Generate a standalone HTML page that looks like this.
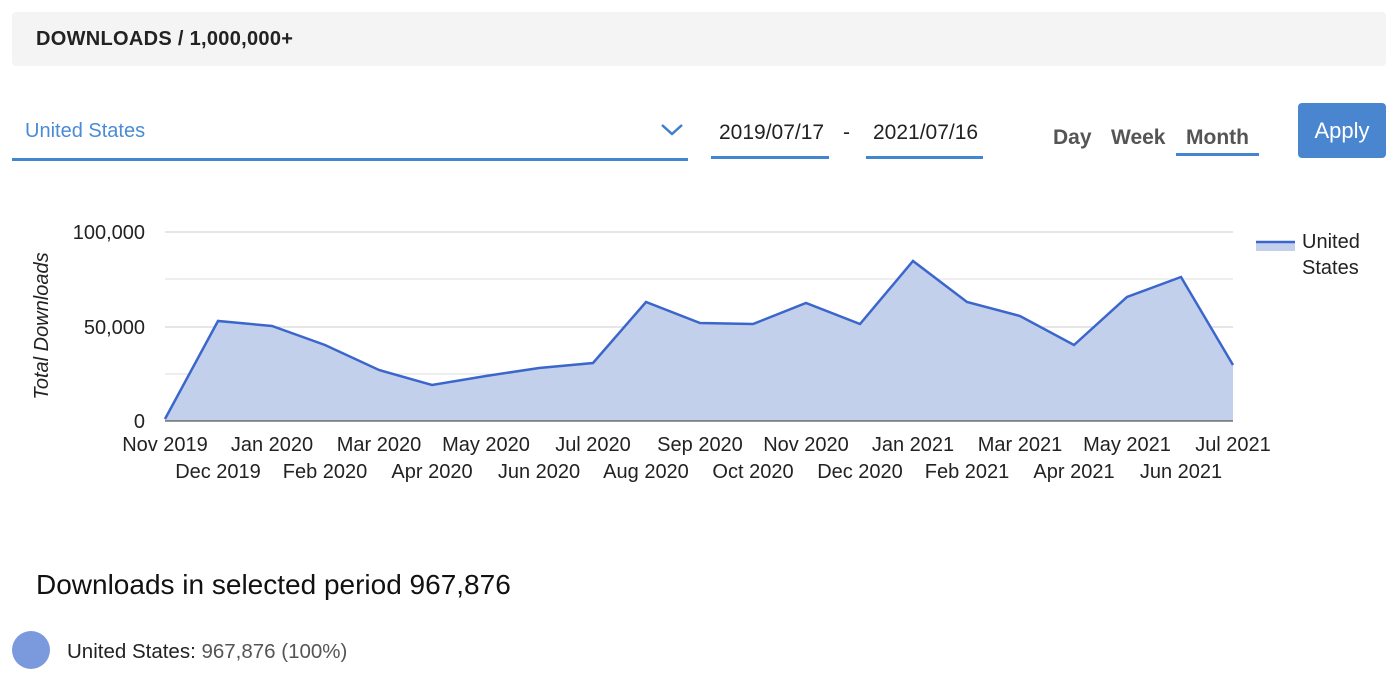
<!DOCTYPE html>
<html><head><meta charset="utf-8"><style>
body{margin:0;width:1400px;height:677px;background:#fff;font-family:"Liberation Sans",Arial,sans-serif;position:relative;overflow:hidden}
.hdr{position:absolute;left:12px;top:12px;width:1374px;height:54px;background:#f4f4f4;border-radius:4px}
.hdr span{position:absolute;left:24px;top:16px;font-size:20px;font-weight:bold;color:#222;letter-spacing:0.3px}
.abs{position:absolute}
</style></head><body>
<div class="hdr"><span>DOWNLOADS / 1,000,000+</span></div>
<div class="abs" style="left:25px;top:120px;font-size:20px;color:#4a8bd6">United States</div>
<svg class="abs" style="left:660px;top:122px" width="24" height="16"><path d="M2 3 L12 12 L22 3" fill="none" stroke="#3f7fcf" stroke-width="2.5"/></svg>
<div class="abs" style="left:12px;top:158px;width:676px;height:3px;background:#4285d0"></div>
<div class="abs" style="left:719px;top:121px;font-size:21px;color:#222">2019/07/17</div>
<div class="abs" style="left:711px;top:156px;width:118px;height:3px;background:#4285d0"></div>
<div class="abs" style="left:843px;top:121px;font-size:21px;color:#222">-</div>
<div class="abs" style="left:873px;top:121px;font-size:21px;color:#222">2021/07/16</div>
<div class="abs" style="left:866px;top:156px;width:117px;height:3px;background:#4285d0"></div>
<div class="abs" style="left:1053px;top:126px;font-size:21px;font-weight:bold;color:#555">Day</div>
<div class="abs" style="left:1111px;top:126px;font-size:21px;font-weight:bold;color:#555">Week</div>
<div class="abs" style="left:1186px;top:126px;font-size:21px;font-weight:bold;color:#555">Month</div>
<div class="abs" style="left:1176px;top:153px;width:83px;height:3px;background:#4285d0"></div>
<div class="abs" style="left:1298px;top:103px;width:88px;height:55px;background:#4a86d0;border-radius:4px;color:#fff;font-size:22px;text-align:center;line-height:55px">Apply</div>
<svg class="abs" style="left:0;top:0" width="1400" height="677">
<g stroke="#ddd" stroke-width="1"><line x1="165" y1="232" x2="1233" y2="232" stroke="#ccc"/><line x1="165" y1="279" x2="1233" y2="279"/><line x1="165" y1="327" x2="1233" y2="327" stroke="#ccc"/><line x1="165" y1="374" x2="1233" y2="374"/></g>
<path d="M165 419 L218 321 L272 326 L325 345 L379 370 L432 385 L486 376 L539 368 L593 363 L646 302 L700 323 L753 324 L806 303 L860 324 L913 261 L967 302 L1020 316 L1074 345 L1127 297 L1181 277 L1233 365 L1233 421 L165 421Z" fill="#c3d0ec"/>
<path d="M165 419 L218 321 L272 326 L325 345 L379 370 L432 385 L486 376 L539 368 L593 363 L646 302 L700 323 L753 324 L806 303 L860 324 L913 261 L967 302 L1020 316 L1074 345 L1127 297 L1181 277 L1233 365" fill="none" stroke="#3b66cc" stroke-width="2.5"/>
<line x1="165" y1="421" x2="1233" y2="421" stroke="#333" stroke-width="1"/>
<g font-size="20" fill="#222" text-anchor="end"><text x="145" y="239">100,000</text><text x="145" y="334">50,000</text><text x="145" y="428">0</text></g>
<text transform="translate(48 326) rotate(-90)" font-size="20" font-style="italic" fill="#222" text-anchor="middle">Total Downloads</text>
<g font-size="20" fill="#222" text-anchor="middle">
<text x="165" y="451">Nov 2019</text><text x="272" y="451">Jan 2020</text><text x="379" y="451">Mar 2020</text><text x="486" y="451">May 2020</text><text x="593" y="451">Jul 2020</text><text x="700" y="451">Sep 2020</text><text x="806" y="451">Nov 2020</text><text x="913" y="451">Jan 2021</text><text x="1020" y="451">Mar 2021</text><text x="1127" y="451">May 2021</text><text x="1233" y="451">Jul 2021</text>
<text x="218" y="478">Dec 2019</text><text x="325" y="478">Feb 2020</text><text x="432" y="478">Apr 2020</text><text x="539" y="478">Jun 2020</text><text x="646" y="478">Aug 2020</text><text x="753" y="478">Oct 2020</text><text x="860" y="478">Dec 2020</text><text x="967" y="478">Feb 2021</text><text x="1074" y="478">Apr 2021</text><text x="1181" y="478">Jun 2021</text>
</g>
<rect x="1256" y="241" width="39" height="10" fill="#c3d0ec"/><line x1="1256" y1="242" x2="1295" y2="242" stroke="#3b66cc" stroke-width="2.5"/>
<text x="1302" y="248" font-size="20" fill="#222">United</text><text x="1302" y="274" font-size="20" fill="#222">States</text>
<circle cx="31" cy="650" r="19" fill="#7b9ade"/>
</svg>
<div class="abs" style="left:36px;top:569px;font-size:28px;color:#111">Downloads in selected period 967,876</div>
<div class="abs" style="left:67px;top:640px;font-size:20.5px;color:#222">United States: <span style="color:#555">967,876 (100%)</span></div>
</body></html>
